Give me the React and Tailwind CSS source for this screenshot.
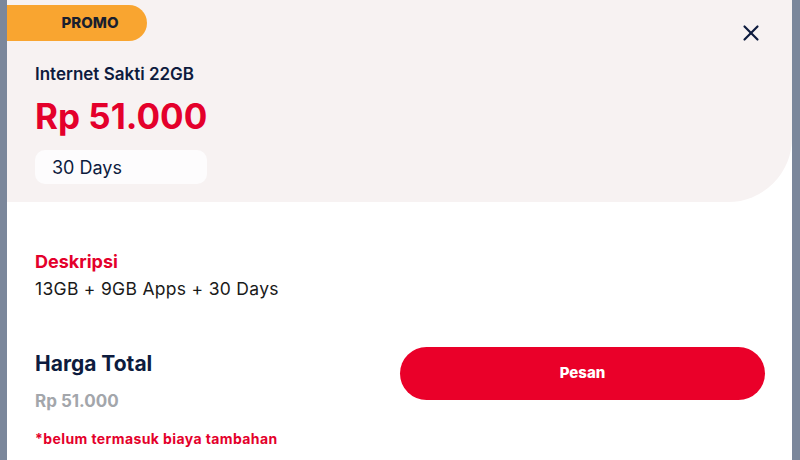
import React from 'react';
import { X } from "lucide-react";

export default function App() {
  return (
    <div className="w-[800px] h-[460px] bg-[#7b879b] flex overflow-hidden" style={{ fontFamily: "Inter, 'Noto Sans', sans-serif" }}>
      <div className="ml-[7px] w-[785px] h-full bg-white flex flex-col">
        {/* Header */}
        <div className="h-[202px] bg-[#f7f2f2] rounded-br-[64px] relative pt-[5px]">
          <div className="w-[140px] h-[36px] bg-[#f9a530] rounded-r-full flex items-center justify-center pl-[26px] text-[15px] font-extrabold text-[#1a1f2e]">
            PROMO
          </div>
          <button className="absolute top-[20px] right-[28px] text-[#0d1b3e]">
            <X size={26} strokeWidth={2} />
          </button>
          <div className="pl-[28px] mt-[21px] text-[17px] font-semibold text-[#0d1b3e] leading-[24px]">
            Internet Sakti 22GB
          </div>
          <div className="pl-[28px] mt-[10px] text-[35px] font-bold text-[#e4002b] leading-[40px]">
            Rp 51.000
          </div>
          <div className="ml-[28px] mt-[14px] w-[172px] h-[34px] bg-[#fdfcfd] rounded-[10px] flex items-center pl-[17px] text-[18px] text-[#0d1b3e]">
            30 Days
          </div>
        </div>

        {/* Description */}
        <div className="pl-[28px] mt-[48px]">
          <div className="text-[18px] font-bold text-[#e4002b] leading-[24px]">Deskripsi</div>
          <div className="text-[17.5px] tracking-[0.3px] text-[#1a1a1a] leading-[26px] mt-[2px]">13GB + 9GB Apps + 30 Days</div>
        </div>

        {/* Total */}
        <div className="flex pl-[28px] pr-[27px] mt-[45px]">
          <div className="flex-1 flex flex-col">
            <div className="text-[21px] font-bold text-[#0d1b3e] leading-[28px] mt-[3px]">Harga Total</div>
            <div className="text-[17px] font-bold text-[#a3a6ab] leading-[24px] mt-[11px]">Rp 51.000</div>
            <div className="text-[14px] tracking-[0.4px] font-bold text-[#e4002b] leading-[18px] mt-[17px]">*belum termasuk biaya tambahan</div>
          </div>
          <button className="w-[365px] h-[53px] bg-[#ea0029] rounded-full text-white text-[15px] font-extrabold">
            Pesan
          </button>
        </div>
      </div>
    </div>
  );
}
